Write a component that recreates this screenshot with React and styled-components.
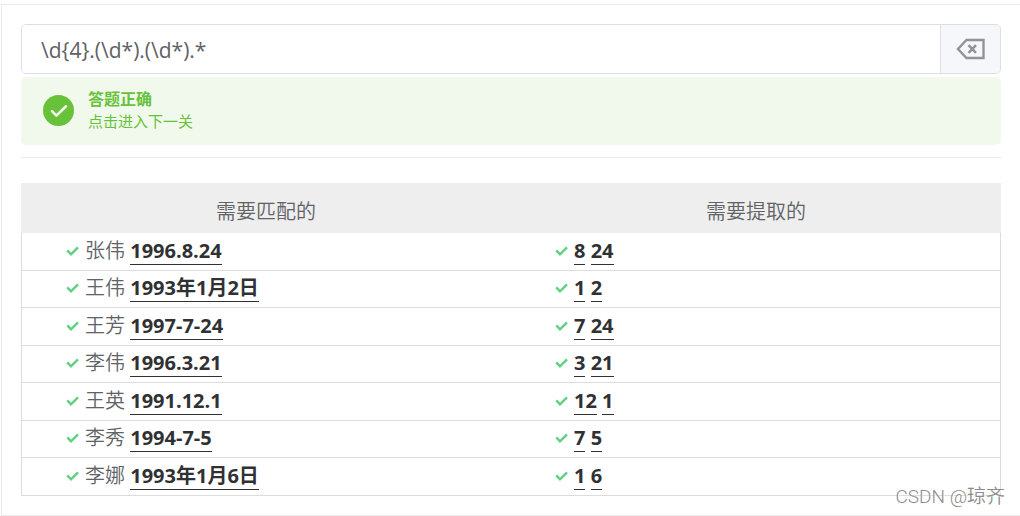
import { useState } from "react";
import styled, { createGlobalStyle } from "styled-components";

const GlobalStyle = createGlobalStyle`
  * {
    box-sizing: border-box;
  }
  body {
    margin: 0;
    background: #fff;
    color: #606266;
    font-family: "Open Sans", "Noto Sans CJK SC", sans-serif;
  }
`;

const Panel = styled.main`
  position: relative; // parent of the watermark
  margin: 4px 0 0 1px;
  padding: 19px;
  border: 1px solid #ebebeb;
  border-right: none;
`;

const InputGroup = styled.div`
  display: flex;
  height: 50px;
  border: 1px solid #dcdfe6;
  border-radius: 5px;
  overflow: hidden;
`;

const PatternInput = styled.input`
  flex: 1;
  min-width: 0;
  padding: 2px 19px 0;
  border: none;
  outline: none;
  background: #fff;
  color: #606266;
  font-family: inherit;
  font-size: 21px;
`;

const ClearButton = styled.button`
  display: flex;
  align-items: center;
  justify-content: center;
  width: 60px;
  padding: 0;
  border: none;
  border-left: 1px solid #dcdfe6;
  background: #f5f7fa;
  color: #909399;
  cursor: pointer;
`;

const Alert = styled.section`
  display: flex;
  align-items: center;
  gap: 14px;
  height: 68px;
  margin-top: 3px;
  padding: 0 22px 2px;
  border-radius: 5px;
  background: #f0f9eb;
  color: #67c23a;
`;

const AlertTitle = styled.strong`
  display: block;
  font-size: 16px;
  font-weight: 700;
  line-height: 22px;
`;

const NextLink = styled.a`
  display: block;
  color: inherit;
  font-size: 15px;
  font-weight: 400;
  line-height: 22px;
  text-decoration: none;
`;

const Divider = styled.hr`
  height: 1px;
  margin: 12px 0 25px;
  border: none;
  background: #ebebeb;
`;

const Table = styled.table`
  width: 100%;
  table-layout: fixed;
  border-collapse: separate;
  border-spacing: 0;
  font-size: 20px;
  line-height: 28px;
`;

const HeadCell = styled.th`
  height: 50px;
  padding: 8px 0 0;
  background: #eee;
  font-weight: 350;
`;

const Row = styled.tr`
  height: 38px;

  &:nth-child(even) {
    height: 37px;
  }
`;

const Cell = styled.td`
  padding: 0 0 2px 44px;
  border-bottom: 1px solid #dcdcdc;
  font-weight: 350;
  white-space: nowrap;

  &:first-child {
    border-left: 1px solid #dcdcdc;
  }
  &:last-child {
    border-right: 1px solid #dcdcdc;
  }
`;

const Match = styled.b`
  display: inline-block;
  height: 28px;
  border-bottom: 1px solid #303133;
  color: #303133;
  font-weight: 700;
`;

const Tick = styled.svg`
  width: 13px;
  height: 13px;
  margin-right: 6px;
`;

const Watermark = styled.span`
  position: absolute;
  right: 15px;
  bottom: 4px;
  color: #8c8c8c;
  font-family: Roboto, "Noto Sans CJK SC", sans-serif;
  font-size: 19px;
  font-weight: 350;
  line-height: 28px;
  text-shadow: 1px 1px 0 #fff;
`;

const rows = [
  { name: "张伟", date: "1996.8.24", groups: ["8", "24"] },
  { name: "王伟", date: "1993年1月2日", groups: ["1", "2"] },
  { name: "王芳", date: "1997-7-24", groups: ["7", "24"] },
  { name: "李伟", date: "1996.3.21", groups: ["3", "21"] },
  { name: "王英", date: "1991.12.1", groups: ["12", "1"] },
  { name: "李秀", date: "1994-7-5", groups: ["7", "5"] },
  { name: "李娜", date: "1993年1月6日", groups: ["1", "6"] },
];

const CheckMark = () => (
  <Tick viewBox="0 0 13 13" fill="none" stroke="#5fcf80" strokeWidth="2.4" aria-hidden="true">
    <path d="M1.3 5.4 L5 9.3 L12 2.4" />
  </Tick>
);

const BackspaceIcon = () => (
  <svg width="30" height="22" viewBox="0 0 30 22" fill="none" stroke="currentColor" strokeWidth="2.4" aria-hidden="true">
    <path d="M10.5 2 H27.5 V20 H10.5 L2 11 Z" />
    <path d="M12.5 7.2 L20 14.8 M20 7.2 L12.5 14.8" strokeWidth="2.6" />
  </svg>
);

const SuccessIcon = () => (
  <svg width="31" height="31" viewBox="0 0 31 31" fill="none" aria-hidden="true">
    <circle cx="15.5" cy="15.5" r="15.5" fill="#67c23a" />
    <path d="M9 16.2 L13.4 20.6 L23 11.3" stroke="#f0f9eb" strokeWidth="2.6" strokeLinecap="round" strokeLinejoin="round" />
  </svg>
);

const App = () => {
  const [pattern, setPattern] = useState("\\d{4}.(\\d*).(\\d*).*");

  return (
    <>
      <GlobalStyle />
      <Panel>
        <InputGroup>
          <PatternInput
            aria-label="正则表达式"
            value={pattern}
            spellCheck={false}
            onChange={(e) => setPattern(e.target.value)}
          />
          <ClearButton type="button" aria-label="清空" onClick={() => setPattern("")}>
            <BackspaceIcon />
          </ClearButton>
        </InputGroup>
        <Alert>
          <SuccessIcon />
          <div>
            <AlertTitle>答题正确</AlertTitle>
            <NextLink href="#next">点击进入下一关</NextLink>
          </div>
        </Alert>
        <Divider />
        <Table>
          <thead>
            <tr>
              <HeadCell scope="col">需要匹配的</HeadCell>
              <HeadCell scope="col">需要提取的</HeadCell>
            </tr>
          </thead>
          <tbody>
            {rows.map((row) => (
              <Row key={row.name}>
                <Cell>
                  <CheckMark />
                  {row.name} <Match>{row.date}</Match>
                </Cell>
                <Cell>
                  <CheckMark />
                  <Match>{row.groups[0]}</Match> <Match>{row.groups[1]}</Match>
                </Cell>
              </Row>
            ))}
          </tbody>
        </Table>
        <Watermark>CSDN @琼齐</Watermark>
      </Panel>
    </>
  );
};

export default App;
